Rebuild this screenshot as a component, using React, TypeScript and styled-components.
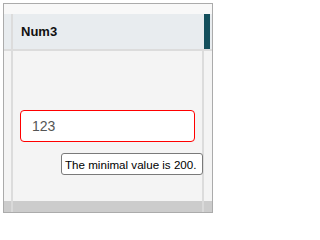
import styled, { createGlobalStyle } from 'styled-components'

const GlobalStyle = createGlobalStyle`
  html, body {
    margin: 0;
    padding: 0;
    background: #ffffff;
    font-family: "Liberation Sans", Arial, sans-serif;
  }
`

const Frame = styled.div`
  margin: 3px;
  width: 208px;
  height: 208px;
  border: 1px solid #ababab;
  background: #f7f7f7;
  display: flex;
  flex-direction: column;
  overflow: hidden;
`

const TopStrip = styled.div`
  height: 10px;
  background: #f8f8f8;
`

const HeaderRow = styled.div`
  display: grid;
  grid-template-columns: 7px 2px 1fr 6px 2px;
  height: 35px;
  background: #e8ecef;
  border-bottom: 2px solid #dcdcdc;
`

const Divider = styled.div<{ $tone?: string }>`
  background: ${(p) => p.$tone ?? '#dcdcdc'};
`

const HeaderCell = styled.div`
  display: flex;
  align-items: center;
  padding-left: 8px;
  font-weight: bold;
  font-size: 13px;
  color: #111111;
`

const AccentBar = styled.div`
  background: #134f5c;
`

const BodyRow = styled.div`
  display: grid;
  grid-template-columns: 7px 2px 1fr 2px 8px;
  height: 150px;
  background: #f4f4f4;
`

const Cell = styled.div`
  position: relative;
  padding: 59px 7px 0 7px;
`

const InputBox = styled.div`
  position: relative;
  box-sizing: border-box;
  width: 175px;
  height: 32px;
  background: #ffffff;
  border: 1px solid #ff0000;
  border-radius: 4px;
  display: flex;
  align-items: center;
  padding-left: 11px;
  font-size: 14px;
  color: #555555;
`

const Tooltip = styled.div`
  position: absolute;
  left: 40px;
  top: 42px;
  box-sizing: border-box;
  width: 142px;
  height: 22px;
  background: #ffffff;
  border: 1px solid #7a7a7a;
  border-radius: 3px;
  display: flex;
  align-items: center;
  padding-left: 3px;
  font-size: 11.6px;
  color: #000000;
  white-space: nowrap;
  z-index: 2;
`

const ScrollRow = styled.div`
  display: grid;
  grid-template-columns: 7px 2px 1fr 2px 8px;
  height: 11px;
  background: #cccccc;
`

export default function App() {
  return (
    <>
      <GlobalStyle />
      <Frame>
        <TopStrip />
        <HeaderRow>
          <div />
          <Divider />
          <HeaderCell>Num3</HeaderCell>
          <AccentBar />
          <Divider $tone="#e8ecef" />
        </HeaderRow>
        <BodyRow>
          <div />
          <Divider />
          <Cell>
            <InputBox>
              123
              <Tooltip>The minimal value is 200.</Tooltip>
            </InputBox>
          </Cell>
          <Divider />
          <div />
        </BodyRow>
        <ScrollRow>
          <div />
          <Divider $tone="#d9d9d9" />
          <div />
          <Divider $tone="#d9d9d9" />
          <div />
        </ScrollRow>
      </Frame>
    </>
  )
}
